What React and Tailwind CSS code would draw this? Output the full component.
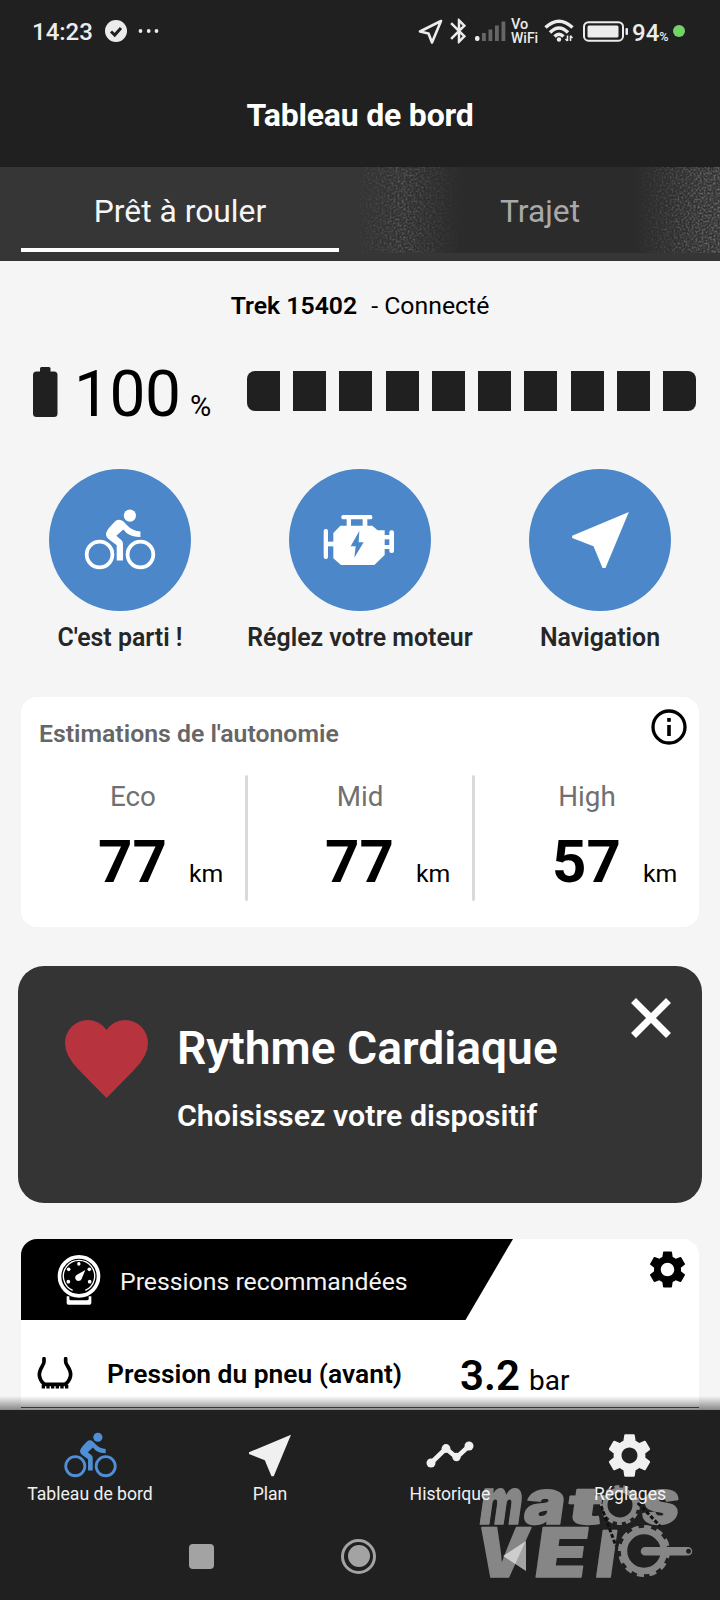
import React from 'react';
import { MdSettings, MdBluetooth } from 'react-icons/md';

function Cyclist({ className }) {
  return (
    <svg className={className} viewBox="252 717 216 185" fill="currentColor">
      <circle cx="298" cy="855" r="39" fill="none" stroke="currentColor" strokeWidth="11.5" />
      <circle cx="422" cy="855" r="39" fill="none" stroke="currentColor" strokeWidth="11.5" />
      <circle cx="390" cy="737" r="18.5" />
      <path d="M347 753Q358 745 370 754L383 768Q398 784 422 785V802Q395 802 380 790L370 779L349 798L363 810Q369 815 369 822V873H350V827L325 808Q312 797 321 783Q325 775 347 753Z" />
    </svg>
  );
}

function Arrow({ className }) {
  return (
    <svg className={className} viewBox="633 726 170 168" fill="currentColor">
      <path d="M803 726L633 797V804L697 829L724 894H733Z" />
    </svg>
  );
}

function Engine({ className }) {
  return (
    <svg className={className} viewBox="0 0 270 210" fill="#fff">
      <rect x="26" y="72" width="13" height="90" rx="6" />
      <rect x="34" y="110" width="24" height="14" />
      <path d="M55 84L76 62H172L188 76H209V150L178 180H78L55 160Z" />
      <rect x="79" y="30" width="93" height="13" rx="5" />
      <rect x="95" y="40" width="13" height="24" />
      <rect x="143" y="40" width="14" height="24" />
      <rect x="206" y="90" width="20" height="13" />
      <rect x="206" y="120" width="20" height="12" />
      <rect x="223" y="76" width="14" height="68" rx="6" />
      <path d="M133 78L107 124H122L118 158L146 112H131Z" fill="#4b87c9" />
    </svg>
  );
}

function Timeline() {
  return (
    <svg className="h-[30px] w-[48px]" viewBox="0 0 48 30" fill="currentColor">
      <path d="M5 23L20 8.500L30.500 17.500L43 6" fill="none" stroke="currentColor" strokeWidth="4.600" strokeLinejoin="round" />
      <circle cx="5" cy="23" r="4.500" />
      <circle cx="20" cy="8.500" r="4.400" />
      <circle cx="30.500" cy="17" r="4.200" />
      <circle cx="43" cy="6" r="4.500" />
    </svg>
  );
}

function Gauge() {
  return (
    <svg className="h-[52px] w-[44px]" viewBox="0 0 132 156" fill="none" stroke="#fff">
      <circle cx="66" cy="67" r="58.5" strokeWidth="11" />
      <path d="M47 109A47 47 0 1 1 85 109" strokeWidth="4" />
      <path d="M37 127H29V147Q29 152 34 152H98Q103 152 103 147V127H95V134Q95 139 90 139H42Q37 139 37 134Z" fill="#fff" stroke="none" />
      <g fill="#fff" stroke="none">
        <rect x="61" y="24" width="9" height="11" rx="4" />
        <circle cx="35" cy="46" r="5.5" />
        <circle cx="97" cy="46" r="5.5" />
        <circle cx="34" cy="83" r="5.5" />
        <circle cx="98" cy="83" r="5.5" />
        <path d="M85 48L74 74A10 10 0 1 1 60 62Z" />
      </g>
    </svg>
  );
}

function StatusBar() {
  return (
    <div className="flex h-[62px] items-center pl-[32px] text-[#ececec]">
      <span className="mt-[2px] w-[73px] text-[24px] font-medium leading-[28px]">14:23</span>
      <svg className="h-[22px] w-[22px]" viewBox="0 0 22 22">
        <circle cx="11" cy="11" r="11" fill="#ececec" />
        <path d="M6 11.5L9.7 15L16 8" fill="none" stroke="#202020" strokeWidth="3" />
      </svg>
      <svg className="ml-[11px] h-[4px] w-[22px]" viewBox="0 0 22 4" fill="#ececec">
        <circle cx="2.5" cy="2" r="1.9" />
        <circle cx="10.7" cy="2" r="1.9" />
        <circle cx="18.5" cy="2" r="1.9" />
      </svg>
      <svg className="ml-[257px] h-[26px] w-[26px]" viewBox="0 0 26 26" fill="none" stroke="#ececec" strokeWidth="2.6" strokeLinejoin="round">
        <path d="M24 3L3 13.5L11.500 15.500L15 24.500Z" />
      </svg>
      <MdBluetooth className="h-[30px] w-[32px]" />
      <svg className="h-[20px] w-[31px]" viewBox="0 0 31 20">
        <rect x="0" y="15" width="4.500" height="5" rx="2" fill="#ececec" />
        <g fill="#666">
          <rect x="7" y="12" width="3.800" height="8" />
          <rect x="13.500" y="8.500" width="3.800" height="11.500" />
          <rect x="20" y="4.500" width="3.800" height="15.500" />
          <rect x="26.500" y="0.500" width="3.800" height="19.500" />
        </g>
      </svg>
      <span className="ml-[5px] flex w-[33px] flex-col text-[14.500px] font-medium leading-[14px]">
        <span className="h-[13px]">Vo</span>
        <span className="h-[13px] text-[14px]">WiFi</span>
      </span>
      <svg className="h-[24px] w-[30px]" viewBox="0 0 30 24" fill="none" stroke="#ececec" strokeWidth="3.500">
        <path d="M1.500 8.500Q15 -4 28.500 8.500" />
        <path d="M6 13.500Q15 4.500 24 13.500" />
        <path d="M10.500 17.500Q15 13 19.500 17.500" />
        <circle cx="15" cy="20.500" r="2.200" fill="#ececec" stroke="none" />
        <path d="M23.500 16.500V22M26.500 16.500V22" strokeWidth="1.600" />
        <path d="M21.500 20L23.500 22M26.500 17L28.500 19" strokeWidth="1.600" />
      </svg>
      <svg className="ml-[9px] h-[21px] w-[46px]" viewBox="0 0 46 21">
        <rect x="1" y="1.200" width="39" height="18.500" rx="4.500" fill="none" stroke="#ececec" strokeWidth="2" />
        <rect x="4.500" y="4.500" width="31" height="12" rx="1.500" fill="#ececec" />
        <rect x="42.500" y="7" width="2.500" height="7" rx="1" fill="#ececec" />
      </svg>
      <span className="ml-[3px] mt-[3px] flex h-[28px] w-[41px] items-baseline text-[24px] font-medium leading-[28px]">
        94<span className="text-[12.500px] leading-[14px]">%</span>
      </span>
      <span className="h-[12px] w-[12px] rounded-full bg-[#74d367]" />
    </div>
  );
}

function Tabs() {
  return (
    <div className="flex h-[94px] bg-[#363636] text-[31.800px] font-normal leading-[36px]">
      <div className="flex w-[360px] flex-col items-center text-[#f5f5f5]">
        <span className="mt-[26px]">Prêt à rouler</span>
        <span className="mt-[19px] h-[4px] w-[318px] bg-white" />
      </div>
      <div className="relative w-[360px]">
        <svg className="absolute inset-0 h-full w-full" viewBox="0 0 360 94" preserveAspectRatio="none">
          <defs>
            <filter id="grain" x="0" y="0" width="1" height="1">
              <feTurbulence type="fractalNoise" baseFrequency="0.5" numOctaves="2" seed="4" />
              <feColorMatrix values="0 0 0 0 .38  0 0 0 0 .38  0 0 0 0 .38  1.500 0 0 0 -.6" />
            </filter>
            <linearGradient id="shade">
              <stop offset="0" stopColor="#343434" />
              <stop offset=".3" stopColor="#2b2b2b" />
              <stop offset=".75" stopColor="#2b2b2b" />
              <stop offset="1" stopColor="#333" />
            </linearGradient>
            <linearGradient id="fade">
              <stop offset="0" stopColor="#222" />
              <stop offset=".12" stopColor="#aaa" />
              <stop offset=".28" stopColor="#000" />
              <stop offset=".76" stopColor="#000" />
              <stop offset=".95" stopColor="#ddd" />
            </linearGradient>
            <mask id="sides"><rect width="360" height="94" fill="url(#fade)" /></mask>
          </defs>
          <rect width="360" height="86" fill="url(#shade)" />
          <g mask="url(#sides)"><rect width="360" height="86" filter="url(#grain)" /></g>
        </svg>
        <span className="relative mt-[26px] block text-center text-[#a9a9a9]">Trajet</span>
      </div>
    </div>
  );
}

function BatteryRow() {
  return (
    <div className="mt-[40px] flex h-[64px] items-center pl-[33px]">
      <svg className="mb-[1px] h-[50px] w-[25px]" viewBox="0 0 25 50" fill="#202020">
        <rect x="7" y="0" width="10.500" height="8" rx="1.500" />
        <rect x="0" y="4.500" width="24.500" height="45.500" rx="3.500" />
      </svg>
      <span className="ml-[16px] mt-[6px] flex w-[173px] items-baseline text-[64px] font-normal leading-[64px]">
        <span className="w-[116px] tracking-[-0.500px]">100</span>
        <span className="text-[29px] leading-[30px]">%</span>
      </span>
      <span className="mb-[2px] flex h-[40px] w-[449px] justify-between overflow-hidden rounded-[8px]">
        {Array.from({ length: 10 }, (_, i) => (
          <span key={i} className="h-full w-[33px] bg-[#202020]" />
        ))}
      </span>
    </div>
  );
}

function Action({ label, children }) {
  return (
    <div className="flex w-[240px] flex-col items-center">
      <div className="flex h-[142px] w-[142px] items-center justify-center rounded-full bg-[#4b87c9] text-white">{children}</div>
      <span className="mt-[13px] whitespace-nowrap text-[24.900px] font-semibold leading-[28px] text-[#262626]">{label}</span>
    </div>
  );
}

function Range({ mode, value }) {
  return (
    <div className="flex h-[126px] w-[227px] shrink-0 flex-col pl-[1px]">
      <span className="mt-[6px] w-[222px] text-center text-[27.800px] font-normal leading-[32px] text-[#707070]">{mode}</span>
      <span className="mt-[19px] flex items-baseline pl-[76px] leading-[60px] text-black">
        <span className="w-[91px] text-[60px] font-bold">{value}</span>
        <span className="text-[24.800px] font-normal">km</span>
      </span>
    </div>
  );
}

function NavItem({ label, children }) {
  return (
    <div className="flex w-[180px] flex-col items-center text-[#f0f0f0]">
      <div className="mt-[18px] flex h-[54px] items-center justify-center">{children}</div>
      <span className="mt-[1px] text-[17.600px] leading-[22px]">{label}</span>
    </div>
  );
}

const letters = [
  { ch: 'm', x: 0, y: 36, w: 42, s: 64 },
  { ch: 'a', x: 44, y: 36, w: 41, s: 62 },
  { ch: 't', x: 88, y: 36, w: 34, s: 51 },
  { ch: 's', x: 162, y: 36, w: 37, s: 62 },
  { ch: 'V', x: 3, y: 89, w: 52, s: 68 },
  { ch: 'E', x: 62, y: 89, w: 52, s: 68 },
  { ch: 'l', x: 123, y: 89, w: 20, s: 64 },
];

function Watermark() {
  return (
    <svg className="pointer-events-none absolute left-[474px] top-[1486px] h-[96px] w-[224px] overflow-visible" viewBox="0 0 224 96" fill="#fff" opacity="0.46">
      <g transform="translate(9 2) skewX(-8)" fontFamily="Inter, sans-serif" fontWeight="900" stroke="#fff" strokeWidth="1.500" strokeLinejoin="round">
        {letters.map((l, i) => (
          <text key={i} x={l.x} y={l.y} fontSize={l.s} textLength={l.w} lengthAdjust="spacingAndGlyphs">{l.ch}</text>
        ))}
      </g>
      <g fill="none" stroke="#fff">
        <circle cx="146" cy="19" r="15" strokeWidth="5" />
        <circle cx="146" cy="19" r="18.500" strokeWidth="3" strokeDasharray="5 4" />
        <circle cx="170" cy="65" r="20" strokeWidth="6.500" />
        <circle cx="170" cy="65" r="24" strokeWidth="4" strokeDasharray="7 5.500" />
      </g>
      <path d="M171 61H214A4 4 0 0 1 214 69.500H171A4 4 0 0 1 171 61ZM214.500 62.800A2.500 2.500 0 1 0 214.600 62.800Z" fillRule="evenodd" />
      <path d="M127 20L142 60M164 17L186 40" fill="none" stroke="#000" strokeWidth="3" strokeDasharray="4 2" />
    </svg>
  );
}

export default function App() {
  return (
    <div className="relative flex h-[1600px] w-[720px] flex-col overflow-hidden bg-[#f5f5f5] font-[Roboto,sans-serif] text-black">
      <header className="bg-[#202020]">
        <StatusBar />
        <h1 className="h-[105px] pt-[34px] text-center text-[32px] font-bold leading-[38px] tracking-[-0.200px] text-white">Tableau de bord</h1>
        <Tabs />
      </header>

      <main className="h-[1149px] overflow-hidden">
        <p className="mt-[31px] flex justify-center gap-[14px] text-[24.800px] leading-[28px]">
          <span className="font-semibold">Trek 15402</span>
          <span>- Connecté</span>
        </p>
        <BatteryRow />
        <div className="mt-[45px] flex">
          <Action label="C'est parti !"><Cyclist className="mt-[-1px] h-[61px] w-[72px]" /></Action>
          <Action label="Réglez votre moteur"><Engine className="h-[70px] w-[90px]" /></Action>
          <Action label="Navigation"><Arrow className="h-[56px] w-[57px]" /></Action>
        </div>

        <section className="mx-[21px] mt-[45px] h-[230px] rounded-[16px] bg-white">
          <div className="flex h-[78px] justify-between pl-[18px] pr-[12px] pt-[12px]">
            <h2 className="mt-[11px] text-[24.800px] font-semibold leading-[28px] text-[#666]">Estimations de l'autonomie</h2>
            <svg className="h-[36px] w-[36px]" viewBox="0 0 36 36">
              <circle cx="18" cy="18" r="16" fill="none" stroke="#000" strokeWidth="3.300" />
              <rect x="16.200" y="9" width="3.600" height="3.800" />
              <rect x="16.200" y="16" width="3.600" height="11" />
            </svg>
          </div>
          <div className="flex">
            <Range mode="Eco" value="77" />
            <span className="-ml-[3px] h-[126px] w-[3px] shrink-0 rounded bg-[#dadada]" />
            <Range mode="Mid" value="77" />
            <span className="-ml-[3px] h-[126px] w-[3px] shrink-0 rounded bg-[#dadada]" />
            <Range mode="High" value="57" />
          </div>
        </section>

        <section className="mx-[18px] mt-[39px] flex h-[237px] rounded-[26px] bg-[#343434] pl-[47px] text-white">
          <svg className="mt-[54px] h-[78px] w-[83px]" viewBox="0 0 83 78">
            <path d="M41.500 78L14 50Q0 36 0 23A23 23 0 0 1 23 0Q34 0 41.500 10Q49 0 60 0A23 23 0 0 1 83 23Q83 36 69 50Z" fill="#b7343f" />
          </svg>
          <div className="ml-[29px] w-[437px]">
            <h2 className="mt-[55px] whitespace-nowrap text-[46.200px] font-semibold leading-[54px]">Rythme Cardiaque</h2>
            <p className="mt-[23px] whitespace-nowrap text-[30.400px] font-semibold leading-[36px]">Choisissez votre dispositif</p>
          </div>
          <svg className="ml-[16px] mt-[31px] h-[42px] w-[42px]" viewBox="0 0 42 42">
            <path d="M3.500 3.500L38.500 38.500M38.500 3.500L3.500 38.500" stroke="#fff" strokeWidth="7" />
          </svg>
        </section>

        <section className="mx-[21px] mt-[36px] h-[200px] overflow-hidden rounded-t-[16px] bg-white">
          <div className="flex justify-between pr-[9px]">
            <div className="flex h-[81px] w-[492px] items-center bg-black pl-[36px] text-[24.800px] leading-[30px] text-[#f4f4f4] [clip-path:polygon(0_0,100%_0,444.5px_100%,0_100%)]">
              <Gauge />
              <span className="ml-[19px] mt-[4px]">Pressions recommandées</span>
            </div>
            <MdSettings className="mt-[8px] h-[45px] w-[45px]" />
          </div>
          <div className="flex h-[88px] items-start border-b border-[#555] pl-[16px]">
            <svg className="mt-[37px] h-[32px] w-[36px]" viewBox="0 0 108 96" fill="none" stroke="#000">
              <path d="M21 5V14C21 24 7 35 7 52Q7 68 20 80M86 5V14C86 24 101 35 101 52Q101 68 87 80" strokeWidth="11" strokeLinecap="round" />
              <path d="M17 82H91" strokeWidth="11" />
              <path d="M14 89H94" strokeWidth="11" strokeDasharray="10 4" />
            </svg>
            <span className="ml-[34px] mt-[39px] w-[353px] whitespace-nowrap text-[26.400px] font-semibold leading-[30px]">Pression du pneu (avant)</span>
            <span className="mt-[34px] flex items-baseline text-[42px] font-semibold leading-[44px]">
              <span className="w-[69px]">3.2</span>
              <span className="text-[28px] font-normal">bar</span>
            </span>
          </div>
        </section>
      </main>

      <footer className="relative h-[190px] bg-[#202020]">
        <div className="absolute inset-x-0 -top-[14px] h-[14px] bg-linear-to-b from-transparent to-black/45" />
        <nav className="flex h-[118px]">
          <NavItem label="Tableau de bord"><Cyclist className="h-[46px] w-[53px] text-[#4f8fd6]" /></NavItem>
          <NavItem label="Plan"><Arrow className="h-[43px] w-[42px]" /></NavItem>
          <NavItem label="Historique"><Timeline /></NavItem>
          <NavItem label="Réglages"><MdSettings className="mr-[1px] h-[53px] w-[53px]" /></NavItem>
        </nav>
        <div className="flex h-[56px] items-center pl-[189px]">
          <span className="h-[25px] w-[25px] rounded-[4px] bg-[#a3a3a3]" />
          <span className="ml-[127px] flex h-[35px] w-[35px] items-center justify-center rounded-full border-[3px] border-[#a3a3a3]">
            <span className="h-[22px] w-[22px] rounded-full bg-[#a3a3a3]" />
          </span>
          <svg className="ml-[127px] h-[30px] w-[24px]" viewBox="0 0 24 30"><path d="M0 15L23 0V30Z" fill="#a3a3a3" /></svg>
        </div>
      </footer>
      <Watermark />
    </div>
  );
}
